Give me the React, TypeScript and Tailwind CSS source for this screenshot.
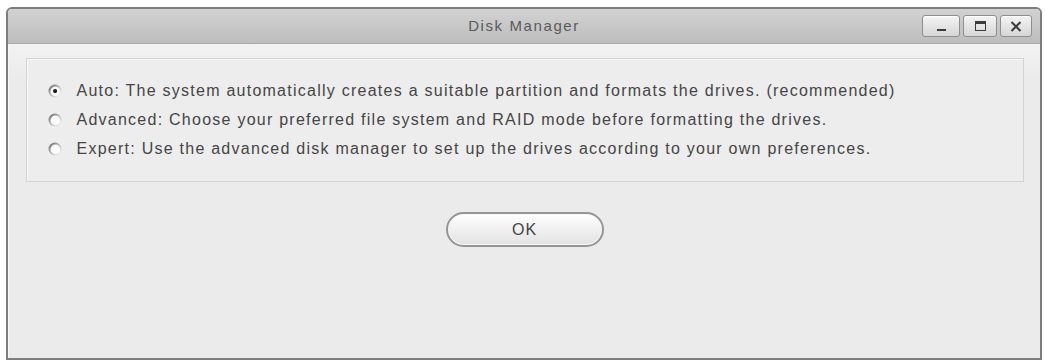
import React, { useState } from "react";

const options = [
      {
            id: "auto",
            label: "Auto: The system automatically creates a suitable partition and formats the drives. (recommended)",
      },
      {
            id: "advanced",
            label: "Advanced: Choose your preferred file system and RAID mode before formatting the drives.",
      },
      {
            id: "expert",
            label: "Expert: Use the advanced disk manager to set up the drives according to your own preferences.",
      },
];

const Radio = ({ checked }: { checked: boolean }) => (
      <svg width="14" height="14" viewBox="0 0 14 14" className="shrink-0">
            <defs>
                  <linearGradient id="rim" x1="0" y1="0" x2="1" y2="1">
                        <stop offset="0" stopColor="#5e5e5e" />
                        <stop offset="0.5" stopColor="#b8b8b8" />
                        <stop offset="1" stopColor="#ffffff" />
                  </linearGradient>
            </defs>
            <circle cx="7" cy="7" r="6.5" fill="url(#rim)" />
            <circle cx="7.4" cy="7.4" r="4.9" fill="#fafafa" />
            {checked && <circle cx="7.1" cy="7.1" r="2.1" fill="#1e1e1e" />}
      </svg>
);

const WinButton = ({ width, children }: { width: string; children: React.ReactNode }) => (
      <div
            className={`${width} h-[22px] flex items-center justify-center rounded-[3px] border border-[#8e8e8e] bg-gradient-to-b from-[#f4f4f4] to-[#d6d6d6] shadow-[inset_0_1px_0_#ffffff]`}
      >
            {children}
      </div>
);

export default function App() {
      const [mode, setMode] = useState("auto");

      return (
            <div className="w-[1045px] h-[362px] bg-white pt-[7px] pl-[6px] font-['Liberation_Sans',Arial,sans-serif]">
                  <div className="w-[1036px] h-[353px] flex flex-col rounded-t-[6px] border-2 border-[#7d7d7d] bg-[#ececec] overflow-hidden">
                        <div className="relative h-[35px] shrink-0 flex items-center justify-center bg-gradient-to-b from-[#d2d2d2] to-[#bdbdbd] border-b border-[#a9a9a9]">
                              <span className="text-[15px] tracking-[1.6px] text-[#5a5a5a]">
                                    Disk Manager
                              </span>
                              <div className="absolute right-[8px] top-[6px] flex gap-[3px]">
                                    <WinButton width="w-[38px]">
                                          <span className="mt-[8px] w-[9px] h-[2px] bg-[#3c3c3c]" />
                                    </WinButton>
                                    <WinButton width="w-[34px]">
                                          <span className="w-[11px] h-[10px] border-[1.5px] border-t-[3px] border-[#3c3c3c]" />
                                    </WinButton>
                                    <WinButton width="w-[32px]">
                                          <svg width="12" height="11" viewBox="0 0 12 11">
                                                <path d="M1.5 1 L10.5 10 M10.5 1 L1.5 10" stroke="#3c3c3c" strokeWidth="2" />
                                          </svg>
                                    </WinButton>
                              </div>
                        </div>

                        <div className="flex-1 flex flex-col items-center bg-gradient-to-b from-[#f2f2f2] to-[#ebebeb] to-[12%] border-l border-[#f6f6f6]">
                              <div className="mt-[14px] w-[998px] h-[124px] flex flex-col justify-center pl-[21px] border border-[#d3d3d3] bg-[#ededed] shadow-[inset_1px_1px_0_#f8f8f8]">
                                    {options.map((opt) => (
                                          <label
                                                key={opt.id}
                                                onClick={() => setMode(opt.id)}
                                                className="h-[29px] flex items-center gap-[15px] cursor-default"
                                          >
                                                <Radio checked={mode === opt.id} />
                                                <span className="text-[16px] tracking-[1.25px] text-[#454545] whitespace-nowrap">
                                                      {opt.label}
                                                </span>
                                          </label>
                                    ))}
                              </div>

                              <button className="mt-[30px] w-[158px] h-[35px] rounded-full border-2 border-[#959595] bg-gradient-to-b from-[#ffffff] to-[#e2e2e2] shadow-[inset_0_0_0_1px_#f8f8f8] text-[16px] tracking-[1px] text-[#444]">
                                    OK
                              </button>
                        </div>
                  </div>
            </div>
      );
}
